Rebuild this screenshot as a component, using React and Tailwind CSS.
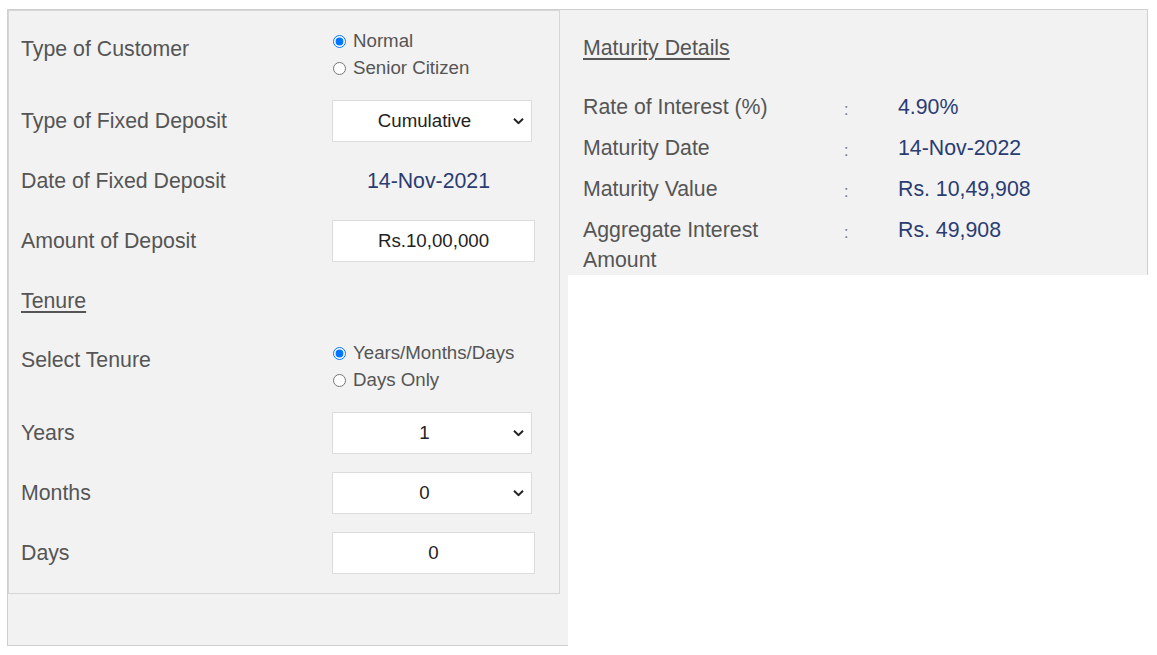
import React, { useState } from "react";

const font = { fontFamily: '"Liberation Sans", Arial, sans-serif' };

function Chevron() {
  return (
    <svg
      className="pointer-events-none absolute right-[8px] top-1/2 -translate-y-1/2"
      width="11"
      height="7"
      viewBox="0 0 11 7"
      fill="none"
    >
      <path d="M1 1.2 L5.5 5.6 L10 1.2" stroke="#222" strokeWidth="2" />
    </svg>
  );
}

function Select({ value, options, onChange }) {
  return (
    <div className="relative w-[200px] h-[42px]">
      <select
        value={value}
        onChange={(e) => onChange(e.target.value)}
        className="appearance-none w-full h-full bg-white border border-[#dcdcdc] pl-[4px] pr-[19px] text-[18.7px] text-[#222] [text-align-last:center] outline-none"
      >
        {options.map((o) => (
          <option key={o} value={o}>
            {o}
          </option>
        ))}
      </select>
      <Chevron />
    </div>
  );
}

function Row({ label, children, top = false, labelClass = "" }) {
  return (
    <div className={`flex ${top ? "items-start" : "items-center"} min-h-[42px]`}>
      <div className={`w-[311px] text-[21.3px] leading-[30px] text-[#555] ${labelClass}`}>{label}</div>
      <div>{children}</div>
    </div>
  );
}

function Radio({ name, label, checked, onChange }) {
  return (
    <label className="flex items-center h-[27px] text-[18.7px] text-[#555]">
      <input
        type="radio"
        name={name}
        checked={checked}
        onChange={onChange}
        className="m-0 ml-[1px] mr-[7px] w-[13px] h-[13px]"
      />
      {label}
    </label>
  );
}

export default function App() {
  const [customer, setCustomer] = useState("normal");
  const [fdType, setFdType] = useState("Cumulative");
  const [amount, setAmount] = useState("Rs.10,00,000");
  const [tenure, setTenure] = useState("ymd");
  const [years, setYears] = useState("1");
  const [months, setMonths] = useState("0");
  const [days, setDays] = useState("0");

  const details = [
    ["Rate of Interest (%)", "4.90%"],
    ["Maturity Date", "14-Nov-2022"],
    ["Maturity Value", "Rs. 10,49,908"],
    ["Aggregate Interest Amount", "Rs. 49,908"]
  ];

  return (
    <div className="min-h-[655px] bg-white pt-[9px] pl-[7px]" style={font}>
      <div className="flex w-[1141px] border-t border-[#cfcfcf]">
        {/* Left: inputs */}
        <div className="w-[561px] h-[636px] bg-[#f2f2f2] border-l border-b border-[#cfcfcf]">
          <div className="w-[552px] h-[584px] border border-[#d6d6d6] pt-[17px] pl-[12px] flex flex-col gap-[18px]">
            <Row label="Type of Customer" top labelClass="mt-[6px]">
              <Radio name="cust" label="Normal" checked={customer === "normal"} onChange={() => setCustomer("normal")} />
              <Radio name="cust" label="Senior Citizen" checked={customer === "senior"} onChange={() => setCustomer("senior")} />
            </Row>

            <Row label="Type of Fixed Deposit">
              <Select value={fdType} options={["Cumulative", "Non-Cumulative"]} onChange={setFdType} />
            </Row>

            <Row label="Date of Fixed Deposit">
              <div className="w-[193px] text-center text-[21.3px] leading-[30px] text-[#2b3c72]">14-Nov-2021</div>
            </Row>

            <Row label="Amount of Deposit">
              <input
                value={amount}
                onChange={(e) => setAmount(e.target.value)}
                className="w-[203px] h-[42px] bg-white border border-[#dcdcdc] text-center text-[18.7px] text-[#222] outline-none"
              />
            </Row>

            <Row label={<span className="underline underline-offset-[3px]">Tenure</span>} />

            <Row label="Select Tenure" top labelClass="mt-[5px]">
              <Radio name="tenure" label="Years/Months/Days" checked={tenure === "ymd"} onChange={() => setTenure("ymd")} />
              <Radio name="tenure" label="Days Only" checked={tenure === "days"} onChange={() => setTenure("days")} />
            </Row>

            <Row label="Years">
              <Select value={years} options={["0", "1", "2", "3", "4", "5", "6", "7", "8", "9", "10"]} onChange={setYears} />
            </Row>

            <Row label="Months">
              <Select value={months} options={["0", "1", "2", "3", "4", "5", "6", "7", "8", "9", "10", "11"]} onChange={setMonths} />
            </Row>

            <Row label="Days">
              <input
                value={days}
                onChange={(e) => setDays(e.target.value)}
                className="w-[203px] h-[42px] bg-white border border-[#dcdcdc] text-center text-[18.7px] text-[#222] outline-none"
              />
            </Row>
          </div>
        </div>

        {/* Right: maturity details */}
        <div className="w-[580px] self-start bg-[#f2f2f2] border-r border-[#cfcfcf] pl-[15px] pt-[23px]">
          <div className="text-[21.3px] leading-[30px] text-[#555] underline underline-offset-[3px]">Maturity Details</div>
          <div className="mt-[29px] flex flex-col gap-[11px]">
            {details.map(([label, value]) => (
              <div key={label} className="flex items-start">
                <div className="w-[260px] pr-[20px] text-[21.3px] leading-[30px] text-[#555]">{label}</div>
                <div className="w-[55px] h-[30px] pl-[1px] text-[16px] leading-[30px] text-[#777] translate-y-[3px]">:</div>
                <div className="text-[21.3px] leading-[30px] text-[#2b3c72]">{value}</div>
              </div>
            ))}
          </div>
        </div>
      </div>
    </div>
  );
}
